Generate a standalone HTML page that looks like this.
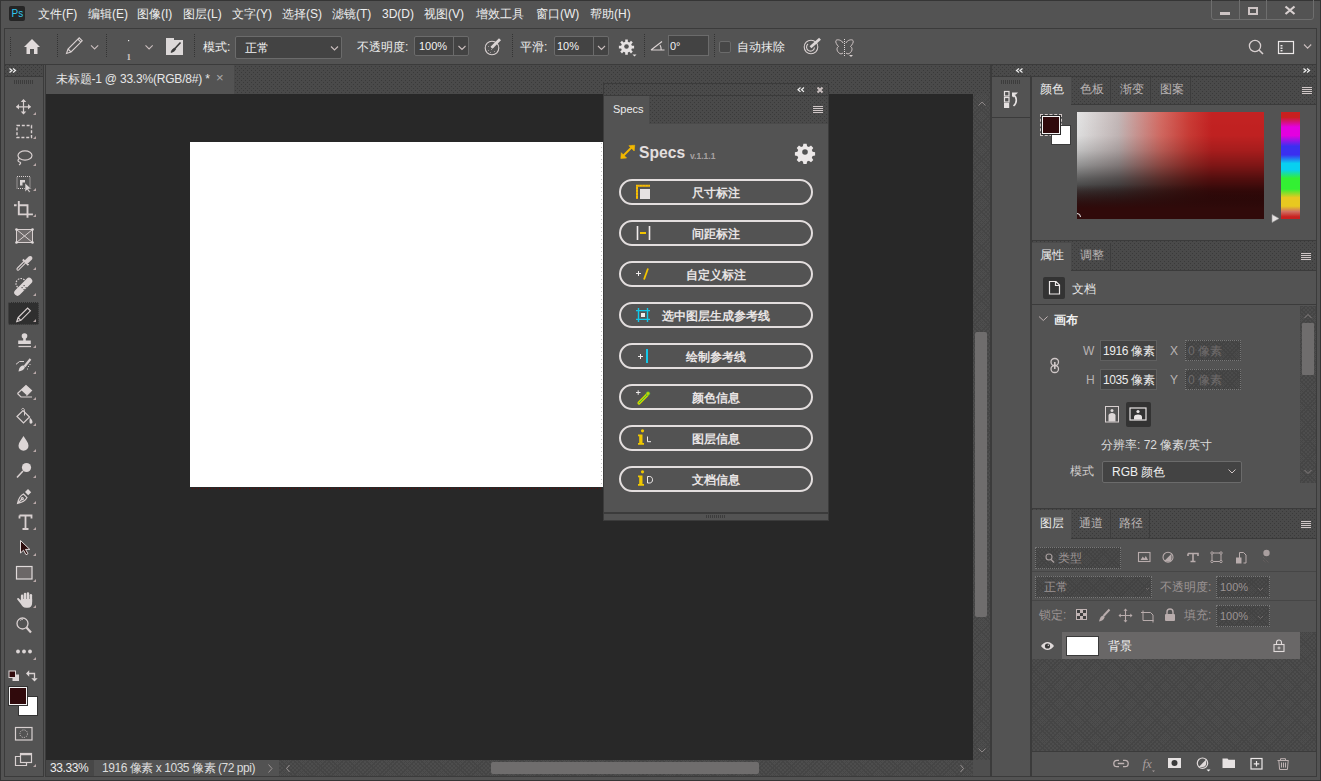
<!DOCTYPE html>
<html><head><meta charset="utf-8">
<style>
*{box-sizing:border-box;margin:0;padding:0}
html,body{width:1321px;height:781px;overflow:hidden}
body{background:#535353;font-family:"Liberation Sans",sans-serif;font-size:12px;color:#eeeeee;position:relative}
.a{position:absolute}
.t{position:absolute;white-space:nowrap;line-height:14px}
.dot{background-color:#4a4a4a;background-image:conic-gradient(from 270deg at 1px 1px,#3a3a3a 90deg,transparent 0),conic-gradient(from 270deg at 1px 1px,#3a3a3a 90deg,transparent 0);background-size:4px 4px,4px 4px;background-position:0 0,2px 2px}
.chk{background-color:#4d4d4d;background-image:repeating-linear-gradient(45deg,#454545 0 1px,transparent 1px 3px),repeating-linear-gradient(-45deg,#454545 0 1px,transparent 1px 3px)}
.bd{border:1px solid #3b3b3b}
.inp{position:absolute;background:#434343;border:1px solid #6b6b6b;border-radius:2px}
.dis{position:absolute;border:1px dotted #777;background-color:#4a4a4a;background-image:repeating-linear-gradient(45deg,#434343 0 1px,transparent 1px 3px),repeating-linear-gradient(-45deg,#434343 0 1px,transparent 1px 3px)}
.g{color:#b9b3b3}
.btn{position:absolute;left:619px;width:194px;height:26px;border:2px solid #e3dede;border-radius:13px}
.btxt{position:absolute;white-space:nowrap;line-height:14px;font-weight:bold;color:#e8e4e4;font-size:12px}
</style></head><body>
<!-- outer border -->
<div class="a" style="left:0;top:0;width:1321px;height:781px;border:1px solid #353535"></div>

<!-- Ps logo -->
<div class="a" style="left:9px;top:6px;width:16px;height:15px;background:#252525;border-radius:2px"></div>
<div class="t" style="left:11.5px;top:7.5px;font-size:10px;line-height:12px;color:#31c5f0;letter-spacing:0px">Ps</div>

<!-- Menu -->
<div class="t" style="left:38px;top:7px">文件(F)</div>
<div class="t" style="left:88px;top:7px">编辑(E)</div>
<div class="t" style="left:137px;top:7px">图像(I)</div>
<div class="t" style="left:183px;top:7px">图层(L)</div>
<div class="t" style="left:232px;top:7px">文字(Y)</div>
<div class="t" style="left:282px;top:7px">选择(S)</div>
<div class="t" style="left:332px;top:7px">滤镜(T)</div>
<div class="t" style="left:382px;top:7px">3D(D)</div>
<div class="t" style="left:424px;top:7px">视图(V)</div>
<div class="t" style="left:476px;top:7px">增效工具</div>
<div class="t" style="left:536px;top:7px">窗口(W)</div>
<div class="t" style="left:590px;top:7px">帮助(H)</div>

<!-- window controls -->
<div class="a" style="left:1211px;top:-3px;width:103px;height:23px;border:1px solid #6e6e6e;border-radius:0 0 3px 3px"></div>
<div class="a" style="left:1239px;top:0;width:1px;height:19px;background:#6e6e6e"></div>
<div class="a" style="left:1266px;top:0;width:1px;height:19px;background:#6e6e6e"></div>
<div class="a" style="left:1220px;top:12px;width:10px;height:3px;background:#cdc4c4"></div>
<div class="a" style="left:1248px;top:7px;width:10px;height:8px;border:2px solid #cdc4c4"></div>

<!-- Options bar -->
<div class="a bd" style="left:4px;top:28px;width:1313px;height:37px;background:#535353"></div>
<div class="t" style="left:203px;top:40px">模式:</div>
<div class="inp" style="left:235px;top:36px;width:107px;height:23px"></div>
<div class="t" style="left:245px;top:41px;color:#f2f2f2">正常</div>
<div class="t" style="left:357px;top:40px">不透明度:</div>
<div class="inp" style="left:414px;top:36px;width:55px;height:20px"></div>
<div class="a" style="left:453px;top:37px;width:1px;height:18px;background:#6b6b6b"></div>
<div class="t" style="left:419px;top:39px;color:#f2f2f2;font-size:11px">100%</div>
<div class="t" style="left:520px;top:40px">平滑:</div>
<div class="inp" style="left:554px;top:36px;width:55px;height:20px"></div>
<div class="a" style="left:593px;top:37px;width:1px;height:18px;background:#6b6b6b"></div>
<div class="t" style="left:557px;top:39px;color:#f2f2f2;font-size:11px">10%</div>
<div class="a" style="left:668px;top:35px;width:41px;height:21px;background:#434343;border:1px solid #6b6b6b"></div>
<div class="t" style="left:670px;top:39px;color:#f2f2f2;font-size:11px">0°</div>
<div class="a" style="left:719px;top:41px;width:12px;height:12px;border:1px solid #6b6b6b;border-radius:2px;background:#474747"></div>
<div class="t" style="left:737px;top:40px">自动抹除</div>

<!-- Tool panel -->
<div class="a dot" style="left:4px;top:64px;width:40px;height:13px;border:1px solid #3b3b3b"></div>
<div class="a bd" style="left:4px;top:76px;width:40px;height:701px;background:#535353"></div>
<div class="a" style="left:8px;top:302px;width:31px;height:23px;background:#2f2f2f;border:1px dotted #505050;border-radius:2px"></div>

<!-- doc area -->
<div class="a dot" style="left:45px;top:64px;width:946px;height:30px"></div>
<div class="a" style="left:46px;top:65px;width:188px;height:29px;background:#535353"></div>
<div class="t" style="left:56px;top:72px;color:#e6e6e6;letter-spacing:-0.2px">未标题-1 @ 33.3%(RGB/8#) *</div>
<div class="t" style="left:216px;top:71px;color:#aaaaaa;font-size:13px">×</div>
<div class="a" style="left:46px;top:94px;width:927px;height:666px;background:#282828"></div>
<div class="a chk" style="left:973px;top:94px;width:17px;height:666px"></div>
<div class="a" style="left:975px;top:332px;width:12px;height:285px;background:#6f6d6d;border-radius:2px"></div>
<div class="a" style="left:46px;top:760px;width:48px;height:16px;background:#474747"></div><div class="a" style="left:94px;top:760px;width:185px;height:16px;background:#525252"></div>
<div class="a chk" style="left:279px;top:760px;width:694px;height:16px"></div>
<div class="a" style="left:973px;top:760px;width:17px;height:16px;background:#4f4f4f"></div>
<div class="a" style="left:491px;top:762px;width:268px;height:12px;background:#6f6d6d;border-radius:2px"></div>
<div class="t" style="left:50px;top:761px;color:#ececec;letter-spacing:-0.4px">33.33%</div>
<div class="t" style="left:102px;top:761px;color:#dcdcdc;letter-spacing:-0.45px">1916 像素 x 1035 像素 (72 ppi)</div>
<div class="a" style="left:45px;top:64px;width:946px;height:713px;border:1px solid #3b3b3b"></div>

<!-- document white -->
<div class="a" style="left:190px;top:142px;width:413px;height:345px;background:#ffffff"></div>

<!-- Specs panel -->
<div class="a dot" style="left:603px;top:83px;width:226px;height:12px;border:1px solid #3b3b3b;border-bottom:none"></div>
<div class="a dot" style="left:603px;top:95px;width:226px;height:29px;border-left:1px solid #3b3b3b;border-right:1px solid #3b3b3b;border-top:1px solid #3b3b3b"></div>
<div class="a" style="left:604px;top:96px;width:45px;height:28px;background:#535353"></div>
<div class="t" style="left:613px;top:102px;color:#ececec;font-size:11px">Specs</div>
<div class="a" style="left:603px;top:124px;width:226px;height:397px;background:#535353;border:1px solid #3b3b3b;border-top:none"></div>
<div class="a" style="left:604px;top:512px;width:224px;height:2px;background:#3b3b3b"></div>
<div class="t" style="left:639px;top:142px;color:#e2dede;font-size:17px;line-height:22px;font-weight:bold;transform:scaleX(0.92);transform-origin:0 0">Specs</div>
<div class="t" style="left:690px;top:151px;color:#a8a2a2;font-size:8.5px;line-height:10px;font-weight:bold">v.1.1.1</div>
<div class="btn" style="top:179px"></div>
<div class="btn" style="top:220px"></div>
<div class="btn" style="top:261px"></div>
<div class="btn" style="top:302px"></div>
<div class="btn" style="top:343px"></div>
<div class="btn" style="top:384px"></div>
<div class="btn" style="top:425px"></div>
<div class="btn" style="top:466px"></div>
<div class="btxt" style="left:692px;top:186px">尺寸标注</div>
<div class="btxt" style="left:692px;top:227px">间距标注</div>
<div class="btxt" style="left:686px;top:268px">自定义标注</div>
<div class="btxt" style="left:662px;top:309px">选中图层生成参考线</div>
<div class="btxt" style="left:686px;top:350px">绘制参考线</div>
<div class="btxt" style="left:692px;top:391px">颜色信息</div>
<div class="btxt" style="left:692px;top:432px">图层信息</div>
<div class="btxt" style="left:692px;top:473px">文档信息</div>

<!-- right header strip -->
<div class="a dot" style="left:991px;top:64px;width:326px;height:13px;border:1px solid #3b3b3b"></div>
<!-- narrow column -->
<div class="a bd" style="left:991px;top:76px;width:40px;height:701px;background:#535353"></div>
<div class="a" style="left:992px;top:117px;width:38px;height:1px;background:#3b3b3b"></div>

<!-- right panels container -->
<div class="a bd" style="left:1031px;top:76px;width:286px;height:701px;background:#535353"></div>

<!-- Color panel -->
<div class="a dot" style="left:1032px;top:77px;width:284px;height:28px;border-bottom:1px solid #3b3b3b"></div>
<div class="a" style="left:1032px;top:77px;width:39px;height:28px;background:#535353"></div>
<div class="a" style="left:1110px;top:77px;width:1px;height:27px;background:#3d3d3d"></div>
<div class="a" style="left:1150px;top:77px;width:1px;height:27px;background:#3d3d3d"></div>
<div class="a" style="left:1190px;top:77px;width:1px;height:27px;background:#3d3d3d"></div>
<div class="t" style="left:1040px;top:82px;color:#ececec">颜色</div>
<div class="t g" style="left:1080px;top:82px">色板</div>
<div class="t g" style="left:1120px;top:82px">渐变</div>
<div class="t g" style="left:1160px;top:82px">图案</div>
<div class="a" style="left:1077px;top:112px;width:187px;height:107px;background:linear-gradient(to bottom,rgba(48,10,10,0) 68%,#300a0a 90%),linear-gradient(to bottom,#fff 0%,#f8f8f8 22%,#d8d8d8 36%,#a4a4a4 50%,#6c6c6c 62%,#404040 74%,#202020 90%),linear-gradient(to right,#e4e4e4 0%,#c4b8b8 22%,#d46a62 45%,#cc3c36 60%,#c42222 72%);background-blend-mode:normal,multiply,normal"></div>
<div class="a" style="left:1281px;top:112px;width:19px;height:107px;background:linear-gradient(to bottom,#c8201f 0%,#c8201f 5%,#e400e0 14%,#e400e0 22%,#3a2ff0 32%,#3a2ff0 40%,#08d0f0 48%,#08d0f0 54%,#33f033 62%,#33f033 72%,#e8c820 80%,#e8c820 88%,#d07060 93%,#c8201f 98%)"></div>
<div class="a" style="left:1040px;top:114px;width:22px;height:22px;border:1px dashed #cfc6c6"></div>
<div class="a" style="left:1051px;top:125px;width:20px;height:20px;background:#fff;border:1px solid #3b3b3b"></div>
<div class="a" style="left:1042px;top:116px;width:18px;height:18px;background:#300a0c;border:1px solid #f4f4f4;outline:1px solid #2a2a2a"></div>
<div class="a" style="left:1032px;top:240px;width:284px;height:1px;background:#3b3b3b"></div>

<!-- Properties -->
<div class="a dot" style="left:1032px;top:241px;width:284px;height:30px;border-bottom:1px solid #3b3b3b"></div>
<div class="a" style="left:1032px;top:243px;width:39px;height:28px;background:#535353"></div>
<div class="a" style="left:1110px;top:243px;width:1px;height:27px;background:#3d3d3d"></div>
<div class="t" style="left:1040px;top:248px;color:#ececec">属性</div>
<div class="t g" style="left:1080px;top:248px">调整</div>
<div class="a" style="left:1043px;top:277px;width:22px;height:22px;background:#333;border-radius:2px"></div>
<div class="t" style="left:1072px;top:282px;color:#e6e6e6">文档</div>
<div class="a" style="left:1032px;top:304px;width:284px;height:1px;background:#3b3b3b"></div>
<div class="t" style="left:1054px;top:313px;color:#f0f0f0;font-weight:bold">画布</div>
<div class="a chk" style="left:1300px;top:306px;width:16px;height:177px"></div>
<div class="a" style="left:1302px;top:323px;width:12px;height:52px;background:#6f6d6d;border-radius:1px"></div>
<div class="t g" style="left:1083px;top:344px">W</div>
<div class="inp" style="left:1100px;top:340px;width:57px;height:21px;border-radius:0;border-color:#606060"></div>
<div class="t" style="left:1103px;top:344px;color:#ececec;letter-spacing:-0.4px">1916 像素</div>
<div class="t g" style="left:1170px;top:344px">X</div>
<div class="dis" style="left:1185px;top:340px;width:56px;height:21px"></div>
<div class="t" style="left:1188px;top:344px;color:#6e6a6a">0 像素</div>
<div class="t g" style="left:1086px;top:373px">H</div>
<div class="inp" style="left:1100px;top:369px;width:57px;height:21px;border-radius:0;border-color:#606060"></div>
<div class="t" style="left:1103px;top:373px;color:#ececec;letter-spacing:-0.4px">1035 像素</div>
<div class="t g" style="left:1170px;top:373px">Y</div>
<div class="dis" style="left:1185px;top:369px;width:56px;height:21px"></div>
<div class="t" style="left:1188px;top:373px;color:#6e6a6a">0 像素</div>
<div class="a" style="left:1126px;top:402px;width:25px;height:25px;background:#333;border-radius:2px"></div>
<div class="t" style="left:1101px;top:438px;color:#dcdcdc">分辨率: 72 像素/英寸</div>
<div class="t g" style="left:1070px;top:464px;color:#d0cccc">模式</div>
<div class="inp" style="left:1102px;top:461px;width:140px;height:22px"></div>
<div class="t" style="left:1112px;top:465px;color:#f0f0f0">RGB 颜色</div>
<div class="a" style="left:1032px;top:508px;width:284px;height:1px;background:#3b3b3b"></div>

<!-- Layers -->
<div class="a dot" style="left:1032px;top:509px;width:284px;height:30px;border-bottom:1px solid #3b3b3b"></div>
<div class="a" style="left:1032px;top:510px;width:39px;height:29px;background:#535353"></div>
<div class="a" style="left:1110px;top:510px;width:1px;height:28px;background:#3d3d3d"></div>
<div class="a" style="left:1149px;top:510px;width:1px;height:28px;background:#3d3d3d"></div>
<div class="t" style="left:1040px;top:516px;color:#ececec">图层</div>
<div class="t g" style="left:1079px;top:516px">通道</div>
<div class="t g" style="left:1119px;top:516px">路径</div>
<div class="dis" style="left:1035px;top:547px;width:86px;height:22px"></div>
<div class="t" style="left:1058px;top:551px;color:#9c9494">类型</div>
<div class="dis" style="left:1035px;top:576px;width:117px;height:22px"></div>
<div class="t" style="left:1044px;top:580px;color:#9c9494">正常</div>
<div class="t" style="left:1160px;top:580px;color:#9c9494">不透明度:</div>
<div class="dis" style="left:1216px;top:576px;width:54px;height:22px"></div>
<div class="t" style="left:1220px;top:580px;color:#9c9494;font-size:11px">100%</div>
<div class="t" style="left:1039px;top:608px;color:#9c9494">锁定:</div>
<div class="t" style="left:1184px;top:608px;color:#9c9494">填充:</div>
<div class="dis" style="left:1216px;top:605px;width:54px;height:22px"></div>
<div class="t" style="left:1220px;top:609px;color:#9c9494;font-size:11px">100%</div>
<div class="a chk" style="left:1032px;top:632px;width:284px;height:119px"></div>
<div class="a" style="left:1032px;top:632px;width:30px;height:27px;background:#535353"></div>
<div class="a" style="left:1062px;top:632px;width:238px;height:27px;background:#696767"></div>
<div class="a" style="left:1066px;top:636px;width:33px;height:20px;background:#fff;border:1px solid #3a3a3a"></div>
<div class="t" style="left:1108px;top:639px;color:#f0f0f0">背景</div>
<div class="a" style="left:1032px;top:751px;width:284px;height:25px;background:#535353;border-top:1px solid #3b3b3b"></div>

<!--ICONS1--><svg class="a" style="left:0;top:0" width="1321" height="781" viewBox="0 0 1321 781">
<defs>
<pattern id="dp" width="2" height="2" patternUnits="userSpaceOnUse"><rect width="1" height="1" fill="#3a3a3a"/></pattern>
</defs>
<g fill="none" stroke="#d8d0d0" stroke-width="1.1">
<!-- window close X -->
<path d="M1285.5 6.5l9 7.5M1294.5 6.5l-9 7.5" stroke-width="2.2"/>
<!-- options bar separators (dotted) -->
<g stroke="#343434" stroke-width="1" stroke-dasharray="1 1">
<path d="M10.5 37v19M57.5 34v24M106.5 34v24M194.5 34v24M512.5 34v24M644.5 34v24M714.5 34v24"/>
</g>
<!-- home -->
<path d="M24 47l8-8 8 8z" fill="#e0dada" stroke="none"/>
<path d="M26.5 46h11v8h-3.5v-5h-4v5h-3.5z" fill="#e0dada" stroke="none"/>
<!-- pencil -->
<path d="M66.5 53.5l1.5-4.5 11.2-11.2 3 3-11.2 11.2z M68 49l3 3 M77.8 39.2l3 3"/>
<!-- chevrons -->
<path d="M91 45.3l3.6 3.6 3.6-3.6M145.5 45.3l3.6 3.6 3.6-3.6M458.5 46l3.5 3.5 3.5-3.5M598 46l3.5 3.5 3.5-3.5M331 46.5l3.5 3.5 3.5-3.5M1304 44.5l3.6 3.6 3.6-3.6" stroke="#c9bdbd"/>
<!-- brush size -->
<rect x="128" y="40" width="1.2" height="1.2" fill="#e8e8e8" stroke="none"/>
<text x="126.5" y="59.5" fill="#cfc6c6" stroke="none" font-family="Liberation Serif" font-weight="bold" font-size="9">1</text>
<!-- brush preset -->
<path d="M166 38h8v2h9v15h-17z" fill="#dcd8d8" stroke="none"/>
<path d="M180.5 42.5l-6 6.5" stroke="#3a3a3a" stroke-width="1.6"/>
<path d="M174.8 48.2c-2 0.2-3 1.8-3.8 4.2 2.3-0.5 4-1.3 4.5-3.2z" fill="#3a3a3a" stroke="#3a3a3a" stroke-width="0.8"/>
<!-- airbrush -->
<circle cx="492" cy="48" r="6.8"/>
<g fill="#9a9494" stroke="none"><rect x="488" y="46" width="1" height="1"/><rect x="491" y="49" width="1" height="1"/><rect x="488" y="50" width="1" height="1"/><rect x="494" y="51" width="1" height="1"/><rect x="490" y="52" width="1" height="1"/></g>
<path d="M491.5 47.8l8.5-8.5" stroke="#dcd6d6" stroke-width="2.8"/>
<path d="M491.2 48.2l1.2-3.2 2 2z" fill="#dcd6d6" stroke="none"/>
<!-- gear -->
<g transform="translate(626.5 46.5)" fill="#e6e2e2" stroke="none">
<path d="M-1.3 -7h2.6v2.2l1.6 .7 1.6-1.6 1.8 1.8-1.6 1.6.7 1.6h2.2v2.6h-2.2l-.7 1.6 1.6 1.6-1.8 1.8-1.6-1.6-1.6.7v2.2h-2.6v-2.2l-1.6-.7-1.6 1.6-1.8-1.8 1.6-1.6-.7-1.6h-2.2v-2.6h2.2l.7-1.6-1.6-1.6 1.8-1.8 1.6 1.6 1.6-.7z"/>
<circle r="2.3" fill="#535353"/>
</g>
<path d="M632.5 54.5h4l-2 2z" fill="#e6e2e2" stroke="none"/>
<!-- angle -->
<path d="M651 50h13.5M651 50l11-8.5M660 45c1 1.5 1.3 3 1.2 5" stroke="#dcd4d4"/>
<!-- target -->
<circle cx="811" cy="47" r="6.8"/>
<path d="M808 44a4 4 0 1 0 6.5 3.5"/>
<path d="M810.5 47.3l9.5-8.5" stroke="#dcd6d6" stroke-width="2.8"/>
<!-- butterfly -->
<path d="M843 43c-1-3-6-4-7-2.5s1 4.5 2.5 6c-2 1-2 4 0 6s3 1.5 4.5 0.5M846 43c1-3 6-4 7-2.5s-1 4.5-2.5 6c2 1 2 4 0 6s-3 1.5-4.5 0.5" stroke="#d0c6c6" stroke-width="1"/>
<path d="M844.5 39v17" stroke="#e0dada" stroke-width="1" stroke-dasharray="1 1"/>
<path d="M849 55h4l-2 2z" fill="#d8d0d0" stroke="none"/>
<!-- search -->
<circle cx="1255" cy="46" r="5.6" stroke-width="1.3"/>
<path d="M1259 50l4 4" stroke-width="1.6"/>
<!-- workspace -->
<rect x="1278.5" y="41.5" width="15" height="12" stroke="#ece8e8" stroke-width="1.2"/>

<g fill="#ece8e8" stroke="none"><rect x="1280.5" y="45" width="2" height="1.4"/><rect x="1280.5" y="47.5" width="2" height="1.4"/><rect x="1280.5" y="50" width="2" height="1.4"/></g>
<!-- panel arrows >> << -->
<path d="M9.5 68.5l2.5 2-2.5 2M13 68.5l2.5 2-2.5 2" stroke="#f0f0f0" stroke-width="1.2"/>
<path d="M1019 68.5l-2.5 2 2.5 2M1022.5 68.5l-2.5 2 2.5 2" stroke="#f0f0f0" stroke-width="1.2"/>
<path d="M1303.5 68.5l2.5 2-2.5 2M1307 68.5l2.5 2-2.5 2" stroke="#f0f0f0" stroke-width="1.2"/>
<path d="M800.5 87.5l-2.5 2.2 2.5 2.2M804 87.5l-2.5 2.2 2.5 2.2" stroke="#f0f0f0" stroke-width="1.2"/>
<path d="M817.5 87.5l5 5M822.5 87.5l-5 5" stroke="#c9bfbf" stroke-width="2"/>
<!-- grips -->
<g stroke="#3c3c3c" stroke-width="1">
<path d="M14.5 80v4M16.5 80v4M18.5 80v4M20.5 80v4M22.5 80v4M24.5 80v4M26.5 80v4M28.5 80v4M30.5 80v4M32.5 80v4"/>
<path d="M1001.5 80v4M1003.5 80v4M1005.5 80v4M1007.5 80v4M1009.5 80v4M1011.5 80v4M1013.5 80v4M1015.5 80v4M1017.5 80v4M1019.5 80v4"/>
<path d="M706.5 515v3M708.5 515v3M710.5 515v3M712.5 515v3M714.5 515v3M716.5 515v3M718.5 515v3M720.5 515v3M722.5 515v3M724.5 515v3"/>
</g>
<!-- hamburgers -->
<g stroke="#cfc6c6" stroke-width="1">
<path d="M813 106.5h10M813 108.5h10M813 110.5h10M813 112.5h10"/>
<path d="M1302 87.5h10M1302 89.5h10M1302 91.5h10M1302 93.5h10"/>
<path d="M1301 253.5h10M1301 255.5h10M1301 257.5h10M1301 259.5h10"/>
<path d="M1301 521.5h10M1301 523.5h10M1301 525.5h10M1301 527.5h10"/>
</g>
</g>
</svg>
<!--/ICONS1-->
<!--ICONS2--><svg class="a" style="left:0;top:0" width="1321" height="781" viewBox="0 0 1321 781">
<g fill="none" stroke="#d8d0d0" stroke-width="1.2">
<!-- sub-tool triangles -->
<g fill="#b8a8a8" stroke="none">
<path d="M33 115h3v-3z"/><path d="M33 139h3v-3z"/><path d="M33 166h3v-3z"/><path d="M33 191h3v-3z"/><path d="M33 217h3v-3z"/>
<path d="M33 270h3v-3z"/><path d="M33 296h3v-3z"/><path d="M33 322h3v-3z"/><path d="M33 348h3v-3z"/><path d="M33 374h3v-3z"/>
<path d="M33 400h3v-3z"/><path d="M33 426h3v-3z"/><path d="M33 452h3v-3z"/><path d="M33 478h3v-3z"/><path d="M33 504h3v-3z"/>
<path d="M33 530h3v-3z"/><path d="M33 556h3v-3z"/><path d="M33 582h3v-3z"/><path d="M33 608h3v-3z"/><path d="M33 660h3v-3z"/><path d="M33 767h3v-3z"/>
</g>
<!-- move -->
<path d="M23.5 100v14M16.5 106.8h14"/>
<path d="M23.5 99l-2.8 3h5.6zM23.5 114.5l-2.8-3h5.6zM16 106.8l3-2.8v5.6zM31 106.8l-3-2.8v5.6z" fill="#d8d0d0" stroke="none"/>
<!-- marquee -->
<rect x="17" y="125.5" width="14.5" height="12" stroke-dasharray="3 1.8" stroke-width="1.4"/>
<!-- lasso -->
<ellipse cx="25" cy="155.5" rx="7" ry="4.6"/>
<path d="M19.5 158.5c-2 1-2 3 0 3.5s1 2-.5 3"/>
<!-- object select -->
<rect x="17" y="176.5" width="13" height="12" stroke-dasharray="1 1" stroke-width="1"/>
<path d="M20 180h5v2.5h-2.5v3h-2.5z" fill="#dcd6d6" stroke="none"/>
<path d="M25 183v9l2.2-2.2 1.8 2.8 1.4-.8-1.8-2.8h3z" fill="#dcd6d6" stroke="#535353" stroke-width="0.6"/>
<!-- crop -->
<path d="M14 205.2h2.6M18.8 201v13.4h11.4M18.8 205.2h8.7v12.5M30 214.4h2.9" stroke-width="1.9"/>
<!-- frame -->
<rect x="16.5" y="229.5" width="16" height="13" fill="#6e6a6a" stroke-width="1"/>
<path d="M16.5 229.5l16 13M32.5 229.5l-16 13" stroke-width="1"/>
<g fill="#e0dada" stroke="none"><circle cx="16.5" cy="229.5" r="1.3"/><circle cx="32.5" cy="229.5" r="1.3"/><circle cx="16.5" cy="242.5" r="1.3"/><circle cx="32.5" cy="242.5" r="1.3"/></g>
<!-- eyedropper -->
<path d="M24.5 261l-7 7c-1.2 1.2-.2 3 1.2 1.8l7-7" stroke-width="1.1"/>
<path d="M22.8 259.5l5.7 5.7M25.5 261l3.8-3.8c1.2-1.2 3 .6 1.8 1.8l-3.8 3.8z" fill="#dcd6d6" stroke-width="1.8"/>
<!-- healing -->
<circle cx="21" cy="283.5" r="5" stroke-dasharray="1.6 1.2"/>
<path d="M17.5 292.5l11.5-11.5" stroke="#dcd6d6" stroke-width="6.5" stroke-linecap="round"/>
<g fill="#535353" stroke="none"><rect x="21.5" y="287" width="1.2" height="1.2"/><rect x="23.5" y="285" width="1.2" height="1.2"/><rect x="25.5" y="287" width="1.2" height="1.2"/><rect x="23.5" y="289" width="1.2" height="1.2"/></g>
<!-- pencil (selected) -->
<path d="M16.8 321.5l1.3-4 9.5-9.5 2.8 2.8-9.5 9.5z M18 317.5l2.8 2.8"/>
<!-- stamp -->
<circle cx="24.5" cy="336" r="2.8" fill="#dcd6d6" stroke="none"/>
<path d="M23.2 338h2.6v2.5h5v3.5h-12.6v-3.5h5z" fill="#dcd6d6" stroke="none"/>
<path d="M18.5 346.5h12.5" stroke-width="1.3"/>
<!-- history brush -->
<path d="M30.5 359l-6 7.5" stroke-width="2.2"/>
<path d="M23.5 365.5c-3 0-4.5 2.5-5 6 3-.3 5.5-1.5 6.5-4.5z" fill="#dcd6d6" stroke="none"/>
<path d="M24 361.5h-4.5l-3.5 2.8" stroke-width="1"/>
<g fill="#d8d0d0" stroke="none"><rect x="28" y="366" width="1" height="1"/><rect x="29.5" y="364" width="1" height="1"/><rect x="27" y="368.5" width="1" height="1"/></g>
<!-- eraser -->
<path d="M17.5 393.5l8.5-8 5.5 5-5 5.2" fill="none"/>
<path d="M21 390l5-4.5 5.5 5-5 4.5z" fill="#dcd6d6" stroke="none"/>
<path d="M17.5 393.5l3.5 3.5h11" />
<!-- bucket -->
<path d="M17 416.5l6-6 6.5 6.5-6 6z"/>
<path d="M21.5 409.5c1-2 3-1 3 1v5" stroke-width="1"/>
<path d="M29.5 417c1 1.5 3 3 3 5s-3 2.5-3 0 .5-3 0-5z" fill="#dcd6d6" stroke="none"/>
<!-- drop -->
<path d="M23.5 436c2 3.5 5 6.5 5 9.8a5 5 0 0 1-10 0c0-3.3 3-6.3 5-9.8z" fill="#dcd6d6" stroke="none"/>
<!-- dodge -->
<circle cx="26.5" cy="467.5" r="4.6" fill="#dcd6d6" stroke="none"/>
<path d="M23 471l-6 6.5" stroke-width="1.6"/>
<!-- pen -->
<path d="M17.5 503.5c1-5 3-8 6-9.5l3.5 3.5c-1.5 3-4.5 5-9.5 6z M17.5 503.5l4-4"/>
<path d="M25 492l3-3 3.2 3.2-3 3z" fill="#dcd6d6" stroke="none"/>
<circle cx="22.3" cy="498.7" r="1"/>
<!-- type -->
<path d="M19.5 515.5h12v3M19.5 515.5v3M25.5 515.5v13.5M22.5 529h6" stroke-width="1.8"/>
<!-- path select -->
<path d="M20.5 540.5v12.5l3-2.8 2.5 4.5 2-1-2.5-4.3h4.3z" fill="#2c0c0c" stroke="#e0dada" stroke-width="1"/>
<!-- rectangle -->
<rect x="16.5" y="566.5" width="15.5" height="12.5" fill="#6b6767" stroke="#e0dada"/>
<!-- hand -->
<g fill="#dcd6d6" stroke="none" transform="matrix(-1.08 0 0 1 52.2 0)">
<rect x="18.6" y="594" width="2.3" height="9" rx="1.15"/>
<rect x="21.3" y="592.3" width="2.3" height="10" rx="1.15"/>
<rect x="24" y="592.8" width="2.3" height="10" rx="1.15"/>
<rect x="26.7" y="594.5" width="2.3" height="9" rx="1.15"/>
<path d="M18.6 599h10.4v1.5l2-2.2c.8-.8 2 .2 1.3 1.2l-3.3 4.5c-1 1.8-2 3.8-5 3.8h-1.5c-2.5 0-3.9-2-3.9-4.5z"/>
</g>
<!-- zoom -->
<circle cx="22.5" cy="623.5" r="5.5" stroke-width="1.3"/>
<path d="M26.5 627.5l4.5 5" stroke-width="2.2"/>
<path d="M20 620.5a3.5 3.5 0 0 1 3-1" stroke-width="0.8"/>
<!-- more -->
<g fill="#dcd6d6" stroke="none"><circle cx="18" cy="651.5" r="1.9"/><circle cx="24" cy="651.5" r="1.9"/><circle cx="30" cy="651.5" r="1.9"/></g>
<!-- default colors -->
<rect x="12.5" y="674.5" width="6.5" height="6.5" fill="#dcd6d6" stroke="none"/>
<rect x="9" y="671" width="6.5" height="6.5" fill="#300a0c" stroke="#dcd6d6" stroke-width="1"/>
<!-- swap -->
<path d="M28 673.5h6.5v5" stroke-width="1.3"/>
<path d="M26 673.5l3.2-3.2v6.4zM34.5 681.5l-3.2-3.2h6.4z" fill="#dcd6d6" stroke="none"/>
<!-- FG/BG -->
<rect x="18.5" y="696.5" width="19" height="19" fill="#fff" stroke="#333" stroke-width="1"/>
<rect x="8.5" y="686.5" width="19" height="19" fill="#300a0c" stroke="#333" stroke-width="1"/>
<rect x="9.5" y="687.5" width="17" height="17" stroke="#f4f4f4" stroke-width="1"/>
<!-- quick mask -->
<rect x="15.5" y="727.5" width="16.5" height="12.5" stroke-width="1.2"/>
<circle cx="23.7" cy="733.7" r="3.8" stroke-dasharray="1 1.3" stroke-width="1"/>
<!-- screen mode -->
<path d="M20.5 756.5h-5v9h11v-3.5" stroke-width="1.2"/>
<rect x="20.5" y="753.5" width="11" height="9" stroke-width="1.2"/>
<path d="M20.5 754.5h11" stroke-width="1.5"/>
</g>
</svg>
<!--/ICONS2-->
<!--ICONS3--><svg class="a" style="left:0;top:0" width="1321" height="781" viewBox="0 0 1321 781">
<g fill="none" stroke="#d8d0d0" stroke-width="1.2">
<!-- Specs logo arrow -->
<path d="M622.5 156.5l10.5-10.5" stroke="#f2b800" stroke-width="2"/>
<path d="M620.8 158.5l0.5-5.8 5.3 5.3z M634.7 145.2l-0.5 5.8-5.3-5.3z" fill="#f2b800" stroke="#f2b800" stroke-width="0.6"/>
<!-- Specs gear -->
<g transform="translate(805 152)" fill="#ece8e8" stroke="none">
<path d="M-1.6 -8.2h3.2l.5 2.5 1.8.8 2.1-1.5 2.3 2.3-1.5 2.1.8 1.8 2.5.5v3.2l-2.5.5-.8 1.8 1.5 2.1-2.3 2.3-2.1-1.5-1.8.8-.5 2.5h-3.2l-.5-2.5-1.8-.8-2.1 1.5-2.3-2.3 1.5-2.1-.8-1.8-2.5-.5v-3.2l2.5-.5.8-1.8-1.5-2.1 2.3-2.3 2.1 1.5 1.8-.8z"/>
<circle r="2.8" fill="#535353"/>
</g>
<!-- btn1 icon -->
<path d="M637 199v-13.2h13" stroke="#f2c400" stroke-width="2"/>
<path d="M637 199v-13.2h13" stroke="#e05050" stroke-width="0.6" stroke-dasharray="1 2"/>
<rect x="640" y="189" width="10" height="10" fill="#e6e2e2" stroke="none"/>
<!-- btn2 icon -->
<path d="M637.5 226v14M649.5 226v14" stroke="#f0ecec" stroke-width="1.6"/>
<path d="M640 233h6" stroke="#f2c400" stroke-width="2"/>
<!-- btn3 icon -->
<path d="M636 273.5h5M638.5 271v5" stroke="#f0ecec" stroke-width="1"/>
<path d="M644 279.5l4-11" stroke="#f2c400" stroke-width="1.8"/>
<!-- btn4 icon -->
<path d="M638.5 308v14M647.5 308v14M636 310.6h14M636 319.4h14" stroke="#10c8ea" stroke-width="1.4"/>
<rect x="641" y="313" width="4" height="4" fill="#f0ecec" stroke="none"/>
<!-- btn5 icon -->
<path d="M638 356.5h5M640.5 354v5" stroke="#f0ecec" stroke-width="1"/>
<path d="M647 349v14" stroke="#10c8ea" stroke-width="2"/>
<!-- btn6 icon -->
<path d="M636 392.5h4.5M638.2 390.3v4.5" stroke="#f0ecec" stroke-width="1"/>
<path d="M639 403l8-8" stroke="#c8d400" stroke-width="3.2" stroke-linecap="round"/>
<path d="M639 403l8-8" stroke="#40c040" stroke-width="1"/>
<circle cx="648" cy="393.5" r="1.8" fill="#c8d400" stroke="#40c040" stroke-width="0.6"/>
<!-- btn7/8 i -->
<g fill="#f0c800" stroke="none">
<circle cx="642.5" cy="430.8" r="1.6"/><path d="M638 434.5h4.5v8.5h1.5v1.8h-6v-1.8h1.2v-6.7h-1.2z"/>
<circle cx="642.5" cy="471.8" r="1.6"/><path d="M638 475.5h4.5v8.5h1.5v1.8h-6v-1.8h1.2v-6.7h-1.2z"/>
</g>
<path d="M647.5 436.5v5.2h3.5M647.5 476.5v6.5h2c2 0 3-1.3 3-3.2s-1-3.3-3-3.3z" stroke="#f0ecec" stroke-width="1"/>

<!-- history icon -->
<rect x="1004.5" y="91.5" width="4.5" height="4.5" stroke="#e6e2e2" stroke-width="1.2"/>
<rect x="1004.5" y="97.5" width="4.5" height="4.5" stroke="#e6e2e2" stroke-width="1.2"/>
<rect x="1004" y="103" width="5.2" height="5" fill="#e6e2e2" stroke="none"/>
<path d="M1013.5 95c3.5 2 4 7.5 0 11" stroke="#e6e2e2" stroke-width="1.6"/>
<path d="M1012 92.5h6l-2 2-1.8 0.5-.5 2.5-1.7-1.2z" fill="#e6e2e2" stroke="none"/>
<!-- doc edge dots -->
<path d="M192 488.5h411" stroke="#5a0c0c" stroke-width="1" stroke-dasharray="1 2"/>
<path d="M601.5 143v344" stroke="#c4c4c4" stroke-width="1" stroke-dasharray="1 3"/>
<!-- color panel hue slider triangle -->
<path d="M1272 214.5l7 4-7 4z" fill="#e6e2e2" stroke="#999" stroke-width="0.6"/>
<!-- color field picker circle -->
<path d="M1077 213.5a3.5 3.5 0 0 1 3.5 3.5" stroke="#f0f0f0" stroke-width="1"/>

<!-- properties doc icon -->
<path d="M1049.5 281.5h6.5l3.5 3.5v9h-10z M1055.5 281.5v4h4" stroke="#ece8e8" stroke-width="1.2"/>
<!-- chevron canvas -->
<path d="M1039 316.5l4.3 4 4.3-4" stroke="#bfb3b3" stroke-width="1"/>
<!-- scroll arrows -->
<path d="M1304.5 318l3.5-3.5 3.5 3.5M1304.5 470l3.5 3.5 3.5-3.5" stroke="#8a8484" stroke-width="1"/>
<path d="M978.5 105.5l3.5-3.5 3.5 3.5M978.5 748.5l3.5 3.5 3.5-3.5" stroke="#8a8484" stroke-width="1"/>
<path d="M268.5 764.5l3.5 4-3.5 4M289.5 765l-3 3.5 3 3.5M960.5 765l3 3.5-3 3.5" stroke="#9a9494" stroke-width="1"/>
<!-- link -->
<rect x="1051" y="358.5" width="7.5" height="7" rx="3.5" stroke="#d0c8c8" stroke-width="1.3"/>
<rect x="1051" y="365.5" width="7.5" height="7" rx="3.5" stroke="#d0c8c8" stroke-width="1.3"/>
<path d="M1054.8 362v7" stroke="#d0c8c8" stroke-width="1.6"/>
<!-- portrait -->
<rect x="1105.5" y="406.5" width="13" height="15.5" stroke="#d8d0d0" stroke-width="1"/>
<circle cx="1112" cy="410.5" r="1.5" fill="#dcd6d6" stroke="none"/>
<path d="M1108.5 421.5v-6c0-1.5 1.5-2.5 3.5-2.5s3.5 1 3.5 2.5v6z" fill="#dcd6d6" stroke="none"/>
<!-- landscape -->
<rect x="1130" y="408" width="16" height="12" stroke="#e8e4e4" stroke-width="1.2"/>
<circle cx="1138" cy="411.5" r="1.6" fill="#e8e4e4" stroke="none"/>
<path d="M1134 419.5v-3c0-1.3 2-2 4-2s4 .7 4 2v3z" fill="#e8e4e4" stroke="none"/>
<!-- select chevron RGB -->
<path d="M1228.5 469.5l3.5 3.5 3.5-3.5" stroke="#d0c6c6" stroke-width="1"/>
<!-- layers filter row -->
<g stroke="#b8acac" stroke-width="1.1">
<circle cx="1049" cy="557" r="3" stroke="#a89e9e"/><path d="M1051 559.5l3 3" stroke="#a89e9e" stroke-width="1.4"/>
<rect x="1138.5" y="552.5" width="11.5" height="9"/>
<path d="M1140.5 560l2.3-3.5 1.5 2 1.5-2.5 2.3 4z" fill="#b8acac" stroke="none"/>
<circle cx="1168" cy="557.2" r="5"/>
<path d="M1164.5 560.7l7-7v4.5a3.5 3.5 0 0 1-3.5 3.5z" fill="#b8acac" stroke="none"/>
<path d="M1188 553.5h10v2.5M1188 553.5v2.5M1193 553.5v8M1190.5 561.5h5" stroke-width="1.6"/>
<rect x="1212" y="553" width="9" height="8.5" stroke-width="1"/>
<g fill="#535353" stroke="#b8acac" stroke-width="0.9"><circle cx="1212" cy="553" r="1.2"/><circle cx="1221" cy="553" r="1.2"/><circle cx="1212" cy="561.5" r="1.2"/><circle cx="1221" cy="561.5" r="1.2"/></g>
<path d="M1239.5 558v-5.5h4l2.5 2.5v8h-2.5" stroke-width="1"/>
<rect x="1236" y="557.5" width="5.5" height="6" fill="#b8acac" stroke="none"/>
<circle cx="1266.5" cy="553" r="3.2" fill="#a89e9e" stroke="none"/>
<path d="M1263 557l6 6M1263 560l3 3" stroke="#6a6262" stroke-width="1" stroke-dasharray="1 1"/>
</g>
<!-- layers rows separators -->
<path d="M1032 571.5h284M1032 600.5h284" stroke="#464646" stroke-width="1"/>
<!-- select chevron blend (dim) -->
<path d="M1146 588l1.5 1.5 1.5-1.5M1258 588l2.5 2.5 2.5-2.5M1258 616l2.5 2.5 2.5-2.5" stroke="#7a7474" stroke-width="0.8"/>
<!-- lock row icons -->
<g stroke="#b8acac">
<rect x="1076" y="609" width="11" height="11" fill="#c0b4b4" stroke="none"/>
<g fill="#3e3e3e" stroke="none"><rect x="1077" y="610" width="3" height="3"/><rect x="1083" y="610" width="3" height="3"/><rect x="1080" y="613" width="3" height="3"/><rect x="1077" y="616" width="3" height="3"/><rect x="1083" y="616" width="3" height="3"/></g>
<path d="M1109.5 609.5l-6 6.5" stroke-width="2"/>
<path d="M1103.5 615.5c-2.5 0-3.5 2-4.5 6 2.5-.5 5-1.5 5.5-4z" fill="#b8acac" stroke="none"/>
<path d="M1125.5 609.5v12M1119.5 615.5h12" stroke-width="1.1"/>
<path d="M1125.5 608.5l-2 2.2h4zM1125.5 622.5l-2-2.2h4zM1118.5 615.5l2.2-2v4zM1132.5 615.5l-2.2-2v4z" fill="#b8acac" stroke="none"/>
<path d="M1143 610.5v10h10.5M1141 612.5h9.5l2.5 2.5v7.5" stroke-width="1"/>
<rect x="1165" y="614" width="10" height="7" fill="#b8acac" stroke="none" rx="1"/>
<path d="M1167 614v-2a3 3 0 0 1 6 0v2" stroke-width="1.4"/>
</g>
<!-- eye -->
<path d="M1041 646c2-2.8 4.2-4 6.5-4s4.5 1.2 6.5 4c-2 2.8-4.2 4-6.5 4s-4.5-1.2-6.5-4z" fill="#e0dada" stroke="none"/>
<circle cx="1047.5" cy="646" r="2.6" fill="#3a3a3a" stroke="none"/>
<circle cx="1048.3" cy="645.2" r="0.7" fill="#e0dada" stroke="none"/>
<!-- layer lock -->
<rect x="1274" y="644.5" width="10" height="7" stroke="#e0dada" stroke-width="1.1"/>
<path d="M1276.5 644.5v-2a2.5 2.5 0 0 1 5 0v2" stroke="#e0dada" stroke-width="1.1"/>
<path d="M1279 646.5v3M1277.5 648h3" stroke="#e0dada" stroke-width="0.9"/>
<!-- footer icons -->
<g stroke="#bfb3b3" stroke-width="1.2">
<path d="M1119 760.3h-2a3.2 3.2 0 0 0 0 6.4h2M1123 760.3h2a3.2 3.2 0 0 1 0 6.4h-2M1117.8 763.5h6.4" stroke-width="1.3"/>
<text x="1142.5" y="768" fill="#a89e9e" stroke="none" font-family="Liberation Serif" font-style="italic" font-size="13">fx</text>
<path d="M1152 770.5h3l-1.5 1.5z" fill="#a89e9e" stroke="none"/>
<rect x="1168" y="758" width="13" height="10" fill="#e6e2e2" stroke="none"/>
<circle cx="1174.5" cy="763" r="3" fill="#3a3a3a" stroke="none"/>
<circle cx="1202.5" cy="763.2" r="5.2" stroke="#e0dada"/>
<path d="M1198.8 766.9l7.4-7.4v3.7a3.7 3.7 0 0 1-3.7 3.7z" fill="#e0dada" stroke="none"/>
<path d="M1206.5 769.5h4l-2 2z" fill="#f0f0f0" stroke="none"/>
<path d="M1222.5 768v-9.5h5l1 1.2h6.5v8.3z" fill="#e6e2e2" stroke="none"/>
<rect x="1251" y="758.5" width="11" height="10.5" stroke="#ece8e8"/>
<path d="M1256.5 761v5.5M1253.8 763.8h5.5" stroke="#ece8e8"/>
<path d="M1277.5 760.5h11M1280.5 760.5v-1.8h5v1.8M1278.8 760.5l.8 9h7.8l.8-9M1281.5 762.5v5M1283.5 762.5v5M1285.5 762.5v5" stroke="#bfb3b3" stroke-width="1"/>
</g>
</g>
</svg>
<!--/ICONS3-->
</body></html>
